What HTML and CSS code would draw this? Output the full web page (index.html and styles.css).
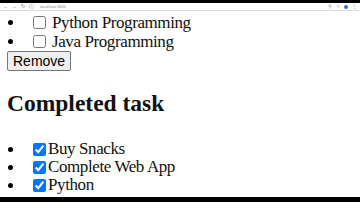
FILE: index.html
```html
<!DOCTYPE html>
<html lang="en">
<head>
    <meta charset="UTF-8">
    <meta name="viewport" content="width=device-width, initial-scale=1.0">
    <title>Todo</title>
    <link rel="stylesheet" href="styles.css">
</head>
<body>
    <div class="frame-top"></div>
    <div class="toolbar">
        <div class="nav">
            <span class="nav-icon">&larr;</span>
            <span class="nav-icon">&rarr;</span>
            <span class="nav-icon">&#8635;</span>
            <span class="nav-icon">&#9432;</span>
            <span class="url">localhost:3000</span>
        </div>
        <div class="actions">
            <span class="nav-icon">&#9906;</span>
            <span class="nav-icon">&#9734;</span>
            <span class="avatar"></span>
            <span class="nav-icon">&#8942;</span>
        </div>
    </div>

    <main class="page">
        <ul class="task-list todo">
            <li><label><input type="checkbox"><span class="task-name">Python Programming</span></label></li>
            <li><label><input type="checkbox"><span class="task-name">Java Programming</span></label></li>
        </ul>
        <button class="remove-btn">Remove</button>

        <h2 class="section-title">Completed task</h2>
        <ul class="task-list done">
            <li><label><input type="checkbox" checked><span class="task-name">Buy Snacks</span></label></li>
            <li><label><input type="checkbox" checked><span class="task-name">Complete Web App</span></label></li>
            <li><label><input type="checkbox" checked><span class="task-name">Python</span></label></li>
        </ul>
    </main>

    <div class="frame-bottom"></div>
</body>
</html>
```

FILE: styles.css
```css
html, body {
    margin: 0;
    padding: 0;
    height: 100%;
    overflow: hidden;
    background: white;
}

body {
    font-family: "Liberation Serif", "Times New Roman", serif;
    color: #111;
}

.frame-top {
    height: 3px;
    background: #000;
}

.frame-bottom {
    position: fixed;
    left: 0;
    right: 0;
    bottom: 0;
    height: 5px;
    background: #000;
}

/* tiny browser bar from the recording */
.toolbar {
    height: 7px;
    display: flex;
    align-items: center;
    justify-content: space-between;
    padding: 0 3px;
    border-bottom: 1px solid #dcdcdc;
    background: #fff;
    font-family: "Liberation Sans", Arial, sans-serif;
    font-size: 4px;
    color: #777;
}

.nav, .actions {
    display: flex;
    align-items: center;
    gap: 4px;
}

.nav-icon {
    font-size: 5px;
    line-height: 1;
}

.url {
    margin-left: 2px;
    color: #888;
}

.avatar {
    width: 4px;
    height: 4px;
    border-radius: 50%;
    background: #3c6fc4;
}

.page {
    padding: 2px 0 0 7px;
}

.task-list {
    list-style: none;
    margin: 0;
    padding: 0;
    font-size: 17px;
    letter-spacing: -0.4px;
}

.task-list li {
    display: flex;
    align-items: center;
    height: 19px;
}

.task-list li::before {
    content: '';
    width: 5px;
    height: 5px;
    border-radius: 50%;
    background: #000;
    margin-left: 1px;
    margin-right: 20px;
    flex-shrink: 0;
}

.task-list label {
    display: flex;
    align-items: center;
    line-height: 18px;
}

.task-list input {
    width: 13px;
    height: 13px;
    margin: 0 2px 0 0;
}

.todo .task-name {
    margin-left: 4px;
}

.done li {
    height: 18px;
}

.remove-btn {
    display: block;
    margin: 0;
    height: 20px;
    padding: 0 5px;
    font-family: "Liberation Sans", Arial, sans-serif;
    font-size: 14px;
    color: #000;
    background: #efefef;
    border: 1px solid #767676;
    border-radius: 2px;
}

.section-title {
    margin: 19px 0 23px;
    font-size: 23.5px;
    line-height: 27px;
    font-weight: bold;
}
```
